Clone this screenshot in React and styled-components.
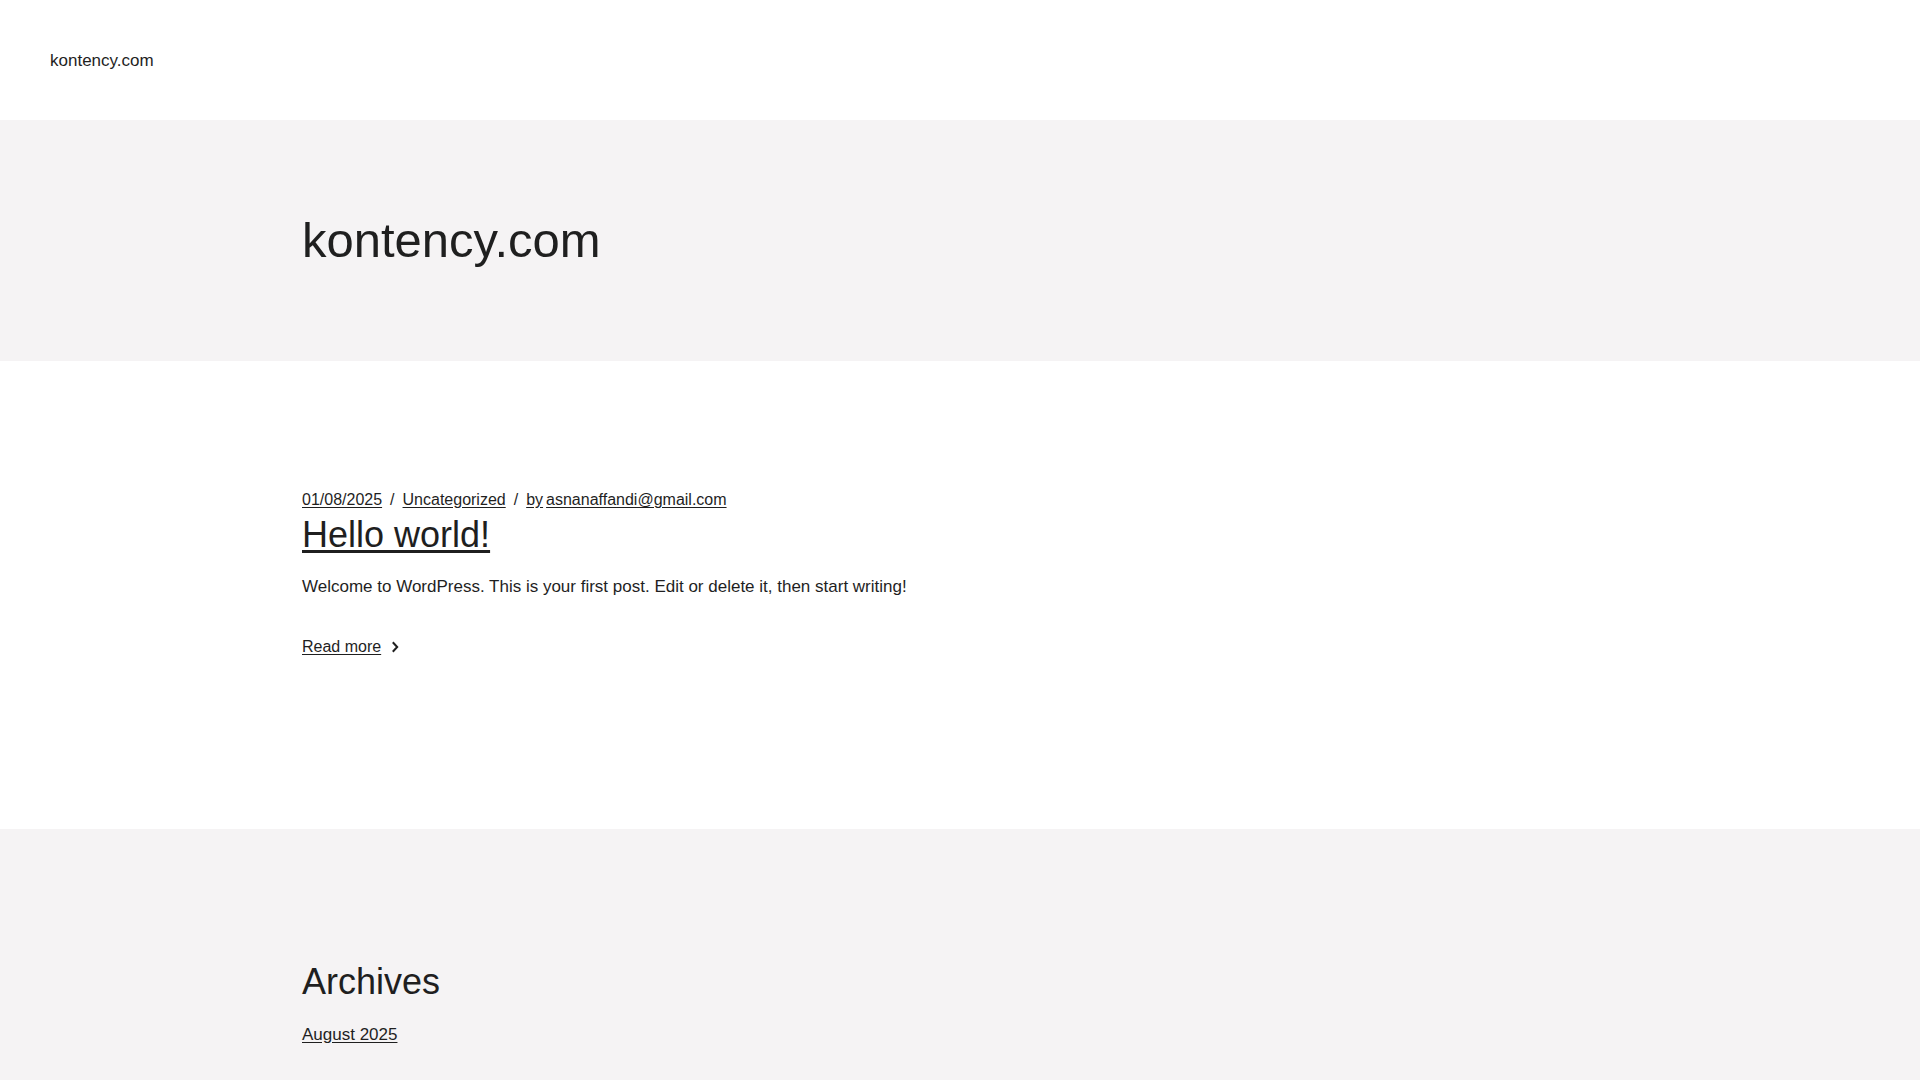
import styled, { createGlobalStyle } from "styled-components";

const GlobalStyle = createGlobalStyle`
  html, body {
    margin: 0;
    padding: 0;
    background: #ffffff;
    color: #1f1f1f;
    font-family: "Liberation Sans", Arial, sans-serif;
  }
  * {
    box-sizing: border-box;
  }
`;

const Header = styled.header`
  height: 120px;
  display: flex;
  align-items: center;
  padding: 0 50px;
  background: #ffffff;
`;

const SiteName = styled.a`
  font-size: 17px;
  line-height: 1.5;
  color: #1f1f1f;
  text-decoration: none;
  margin-top: 1px;
`;

const Band = styled.section`
  background: ${(p) => (p.$tint ? "#f5f3f4" : "#ffffff")};
  padding: ${(p) => p.$pad};
`;

const Container = styled.div`
  max-width: 1316px;
  margin: 0 auto;
`;

const HeroTitle = styled.h1`
  margin: 0;
  font-size: 49px;
  line-height: 1.2;
  font-weight: 400;
`;

const Meta = styled.div`
  display: flex;
  align-items: center;
  font-size: 16px;
  line-height: 24px;
`;

const MetaLink = styled.a`
  color: #1f1f1f;
  text-decoration: underline;
  text-underline-offset: 2px;
`;

const Sep = styled.span`
  margin: 0 8px;
`;

const By = styled.span`
  margin-right: 3px;
  text-decoration: underline;
  text-underline-offset: 2px;
`;

const PostTitle = styled.h2`
  margin: 1px 0 0;
  font-size: 36px;
  line-height: 1.2;
  font-weight: 400;

  a {
    color: #1f1f1f;
    text-decoration: underline;
    text-underline-offset: 3px;
  }
`;

const Excerpt = styled.p`
  margin: 18px 0 0;
  font-size: 17px;
  line-height: 1.5;
`;

const ReadMore = styled.a`
  margin-top: 36px;
  display: inline-flex;
  align-items: center;
  gap: 10px;
  font-size: 16px;
  line-height: 24px;
  color: #1f1f1f;
  text-decoration: none;

  span {
    text-decoration: underline;
    text-underline-offset: 2px;
  }
`;

const Post = styled.article`
  display: flex;
  flex-direction: column;
  align-items: flex-start;
`;

const WidgetTitle = styled.h2`
  margin: 0;
  font-size: 36px;
  line-height: 1.2;
  font-weight: 400;
`;

const ArchiveList = styled.ul`
  list-style: none;
  margin: 18px 0 0;
  padding: 0;
  font-size: 17px;
  line-height: 1.5;

  a {
    color: #1f1f1f;
    text-decoration: underline;
    text-underline-offset: 2px;
  }
`;

function Chevron() {
  return (
    <svg width="8" height="12" viewBox="0 0 8 12" fill="none">
      <path d="M1.8 1.2 L6.2 6 L1.8 10.8" stroke="#1f1f1f" strokeWidth="2" />
    </svg>
  );
}

export default function App() {
  return (
    <>
      <GlobalStyle />
      <Header>
        <SiteName href="#">kontency.com</SiteName>
      </Header>

      <Band $tint $pad="91px 0 91px">
        <Container>
          <HeroTitle>kontency.com</HeroTitle>
        </Container>
      </Band>

      <Band $pad="127px 0 170px">
        <Container>
          <Post>
            <Meta>
              <MetaLink href="#">01/08/2025</MetaLink>
              <Sep>/</Sep>
              <MetaLink href="#">Uncategorized</MetaLink>
              <Sep>/</Sep>
              <By>by</By>
              <MetaLink href="#">asnanaffandi@gmail.com</MetaLink>
            </Meta>
            <PostTitle>
              <a href="#">Hello world!</a>
            </PostTitle>
            <Excerpt>
              Welcome to WordPress. This is your first post. Edit or delete it,
              then start writing!
            </Excerpt>
            <ReadMore href="#">
              <span>Read more</span>
              <Chevron />
            </ReadMore>
          </Post>
        </Container>
      </Band>

      <Band $tint $pad="131px 0 200px">
        <Container>
          <WidgetTitle>Archives</WidgetTitle>
          <ArchiveList>
            <li>
              <a href="#">August 2025</a>
            </li>
          </ArchiveList>
        </Container>
      </Band>
    </>
  );
}
